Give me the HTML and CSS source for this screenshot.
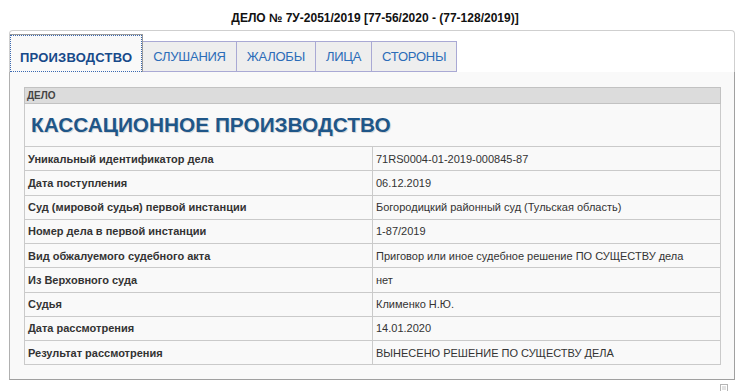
FILE: index.html
```html
<!DOCTYPE html>
<html lang="ru">
<head>
    <meta charset="UTF-8">
    <meta name="viewport" content="width=device-width, initial-scale=1.0">
    <title>Дело № 7У-2051/2019</title>
    <link rel="stylesheet" href="styles.css">
</head>
<body class="body">
    <div class="case-title">ДЕЛО № 7У-2051/2019 [77-56/2020 - (77-128/2019)]</div>
    <div class="tabs-wrap">
        <ul class="tab-bar">
            <li class="tab active"><a href="#">ПРОИЗВОДСТВО</a></li>
            <li class="tab"><a href="#">СЛУШАНИЯ</a></li>
            <li class="tab"><a href="#">ЖАЛОБЫ</a></li>
            <li class="tab"><a href="#">ЛИЦА</a></li>
            <li class="tab"><a href="#">СТОРОНЫ</a></li>
        </ul>
        <div class="panel">
            <table class="case-table">
                <tr class="head-row">
                    <td colspan="2">ДЕЛО</td>
                </tr>
                <tr class="kind-row">
                    <td colspan="2">КАССАЦИОННОЕ ПРОИЗВОДСТВО</td>
                </tr>
                <tr>
                    <td class="lbl">Уникальный идентификатор дела</td>
                    <td>71RS0004-01-2019-000845-87</td>
                </tr>
                <tr>
                    <td class="lbl">Дата поступления</td>
                    <td>06.12.2019</td>
                </tr>
                <tr>
                    <td class="lbl">Суд (мировой судья) первой инстанции</td>
                    <td>Богородицкий районный суд (Тульская область)</td>
                </tr>
                <tr>
                    <td class="lbl">Номер дела в первой инстанции</td>
                    <td>1-87/2019</td>
                </tr>
                <tr>
                    <td class="lbl">Вид обжалуемого судебного акта</td>
                    <td>Приговор или иное судебное решение ПО СУЩЕСТВУ дела</td>
                </tr>
                <tr>
                    <td class="lbl">Из Верховного суда</td>
                    <td>нет</td>
                </tr>
                <tr>
                    <td class="lbl">Судья</td>
                    <td>Клименко Н.Ю.</td>
                </tr>
                <tr>
                    <td class="lbl">Дата рассмотрения</td>
                    <td>14.01.2020</td>
                </tr>
                <tr>
                    <td class="lbl">Результат рассмотрения</td>
                    <td>ВЫНЕСЕНО РЕШЕНИЕ ПО СУЩЕСТВУ ДЕЛА</td>
                </tr>
            </table>
        </div>
    </div>
    <div class="page-foot">
        <svg class="print-icon" width="14" height="10" viewBox="0 0 14 10">
            <rect x="3.5" y="0.5" width="7" height="9" fill="none" stroke="#b5b5b5"/>
            <line x1="5" y1="3" x2="9" y2="3" stroke="#c4c4c4"/>
            <line x1="5" y1="5" x2="9" y2="5" stroke="#c4c4c4"/>
            <line x1="0" y1="7.5" x2="14" y2="7.5" stroke="#b5b5b5"/>
        </svg>
    </div>
</body>
</html>
```

FILE: styles.css
```css
.body {
    margin: 0;
    padding: 0;
    background-color: #fff;
    font-family: "Liberation Sans", Arial, sans-serif;
    color: #333;
}

.case-title {
    padding-top: 10px;
    font-size: 12px;
    line-height: 16px;
    font-weight: bold;
    color: #111;
    text-align: center;
}

.tabs-wrap {
    width: 726px;
    margin: 4px 0 0 9px;
}

.tab-bar {
    display: flex;
    align-items: flex-end;
    margin: 0;
    padding: 3px 0 0 0;
    list-style: none;
    border: 1px solid #cfcfcf;
    border-bottom: none;
    border-radius: 4px 4px 0 0;
}

.tab {
    background-color: #eeeeee;
    border: 1px solid #a9a9d4;
    border-left: none;
}

.tab a {
    display: block;
    padding: 0 10px;
    line-height: 29px;
    font-size: 13px;
    letter-spacing: -0.25px;
    color: #2b6cb8;
    text-decoration: none;
}

.tab.active {
    background-color: #f9f9f9;
    border: none;
    border-top: 1px solid #9a9a9a;
    border-right: 1px solid #9a9a9a;
}

.tab.active a {
    padding-top: 8px;
    font-weight: bold;
    letter-spacing: 0.2px;
    color: #174a8a;
    outline: 1px dotted #3a68b0;
    outline-offset: -1px;
}

.panel {
    padding: 15px 13px 14px 14px;
    background-color: #f9f9f9;
    border: 1px solid #a0a0a0;
    border-top: none;
    border-left-color: #b0b0b0;
}

.case-table {
    width: 100%;
    border-collapse: collapse;
    border: 1px solid #bdbdbd;
}

.case-table td {
    height: 23.25px;
    padding: 0 3px;
    border: 1px solid #cacaca;
    font-size: 11px;
    color: #333;
}

.case-table .lbl {
    width: 341px;
    font-weight: bold;
}

.case-table .head-row td {
    height: 15px;
    padding: 0 2px;
    background-color: #dcdcdc;
    border-color: #c2c2c2;
    font-size: 10px;
    font-weight: bold;
    color: #444;
}

.case-table .kind-row td {
    height: 42px;
    padding-left: 6px;
    font-size: 20.8px;
    font-weight: bold;
    color: #1f5688;
    text-shadow: 1px 1px 0 #d8d8d8;
}

.page-foot {
    display: flex;
    justify-content: flex-end;
    padding: 4px 19px 0 0;
}
```
